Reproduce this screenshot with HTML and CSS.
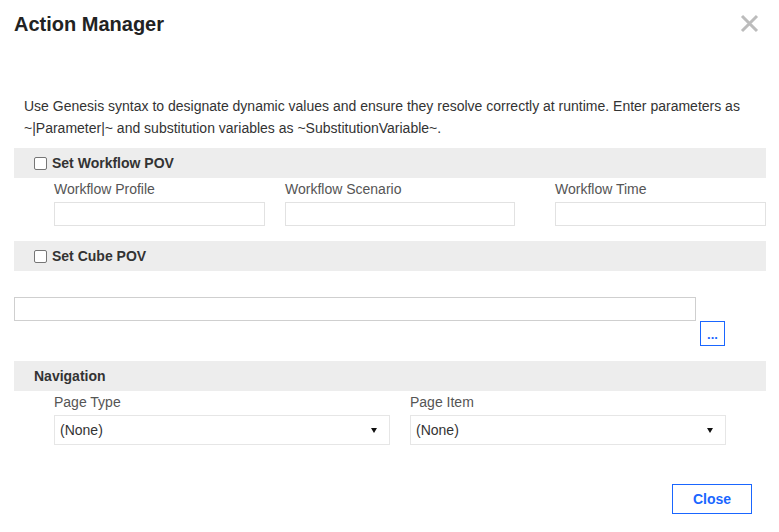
FILE: index.html
```html
<html>
  <head>
    <meta http-equiv="Content-Type" content="text/html; charset=UTF-8">
    <link rel="stylesheet" href="styles.css">
  </head>
  <body>
    <div class="dialog">
      <div class="header">
        <h1>Action Manager</h1>
        <svg class="close-x" width="19" height="19" viewBox="0 0 19 19">
          <path d="M2 2 L17 17 M17 2 L2 17" stroke="#bcbcbc" stroke-width="3" fill="none"/>
        </svg>
      </div>

      <p class="hint">Use Genesis syntax to designate dynamic values and ensure they resolve correctly at runtime. Enter parameters as ~|Parameter|~ and substitution variables as ~SubstitutionVariable~.</p>

      <div class="bar"><input type="checkbox" class="check"><span>Set Workflow POV</span></div>
      <div class="wf-grid">
        <div class="field">
          <label>Workflow Profile</label>
          <div class="box"></div>
        </div>
        <div class="field">
          <label>Workflow Scenario</label>
          <div class="box"></div>
        </div>
        <div class="field">
          <label>Workflow Time</label>
          <div class="box"></div>
        </div>
      </div>

      <div class="bar cube"><input type="checkbox" class="check"><span>Set Cube POV</span></div>
      <div class="cube-row">
        <div class="box wide"></div>
        <div class="dots">...</div>
      </div>

      <div class="bar nav"><span>Navigation</span></div>
      <div class="nav-grid">
        <div class="field">
          <label>Page Type</label>
          <div class="select">(None)<i class="caret"></i></div>
        </div>
        <div class="field">
          <label>Page Item</label>
          <div class="select">(None)<i class="caret"></i></div>
        </div>
      </div>

      <div class="footer">
        <button class="btn">Close</button>
      </div>
    </div>
  </body>
</html>
```

FILE: styles.css
```css
body {
  margin: 0;
  background: #fff;
  font-family: "Liberation Sans", Arial, sans-serif;
  color: #333;
}

.dialog {
  width: 779px;
  height: 532px;
}

.header {
  display: flex;
  justify-content: space-between;
  align-items: flex-start;
  padding: 12px 20px 0 14px;
  height: 36px;
  box-sizing: border-box;
}

.header h1 {
  margin: 0;
  font-size: 20px;
  line-height: 24px;
  font-weight: bold;
  color: #222;
}

.close-x {
  margin-top: 2px;
}

.hint {
  margin: 59px 13px 0 14px;
  padding: 0 10px;
  font-size: 14px;
  line-height: 22px;
  color: #333;
}

.bar {
  display: flex;
  align-items: center;
  height: 30px;
  margin: 9px 13px 0 14px;
  padding-left: 20px;
  background: #ededed;
  font-size: 14px;
  font-weight: bold;
  color: #333;
}

.bar.cube {
  margin-top: 15px;
}

.bar.nav {
  margin-top: 15px;
}

.check {
  -webkit-appearance: none;
  appearance: none;
  width: 13px;
  height: 13px;
  margin: 0 5px 0 0;
  border: 1px solid #767676;
  border-radius: 2px;
  background: #fff;
  box-sizing: border-box;
}

.field label {
  display: block;
  padding: 2px 0 4px;
  font-size: 14px;
  line-height: 18px;
  color: #555;
}

.wf-grid {
  display: grid;
  grid-template-columns: 211px 230px 231px;
  column-gap: 20px;
  margin-left: 54px;
}

.wf-grid .field:nth-child(3) {
  margin-left: 20px;
}

.box {
  height: 24px;
  border: 1px solid #e2e2e2;
  box-sizing: border-box;
}

.cube-row {
  display: flex;
  align-items: flex-start;
  margin: 26px 0 0 14px;
}

.box.wide {
  width: 682px;
  border-color: #cfcfcf;
}

.dots {
  width: 25px;
  height: 25px;
  margin: 24px 0 0 4px;
  border: 1px solid #1a66ff;
  box-sizing: border-box;
  color: #1a66ff;
  font-size: 13px;
  font-weight: bold;
  line-height: 25px;
  text-align: center;
}

.nav-grid {
  display: grid;
  grid-template-columns: 336px 316px;
  column-gap: 20px;
  margin-left: 54px;
}

.select {
  position: relative;
  height: 30px;
  padding-left: 5px;
  border: 1px solid #e6e6e6;
  box-sizing: border-box;
  font-size: 14px;
  line-height: 28px;
  color: #333;
}

.caret {
  position: absolute;
  right: 12px;
  top: 12px;
  width: 0;
  height: 0;
  border-left: 3.5px solid transparent;
  border-right: 3.5px solid transparent;
  border-top: 5px solid #111;
}

.footer {
  display: flex;
  justify-content: flex-end;
  margin-top: 39px;
  padding-right: 27px;
}

.btn {
  width: 80px;
  height: 30px;
  background: #fff;
  border: 1px solid #1a66ff;
  color: #1a66ff;
  font-family: "Liberation Sans", Arial, sans-serif;
  font-size: 14px;
  font-weight: bold;
  padding: 0;
}
```
